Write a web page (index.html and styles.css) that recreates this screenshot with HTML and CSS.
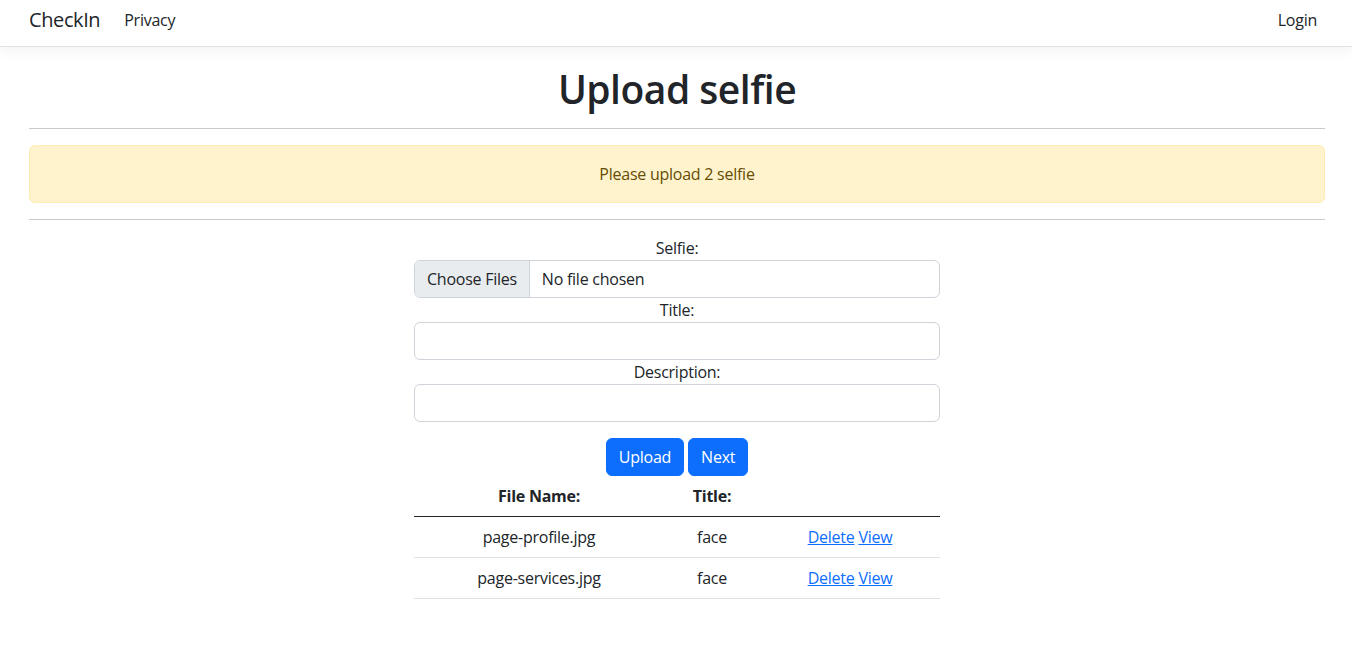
FILE: index.html
```html
<!DOCTYPE html>
<html lang="en">
<head>
<meta charset="utf-8">
<title>Upload selfie - CheckIn</title>
<link rel="stylesheet" href="styles.css">
</head>
<body>
<header>
  <nav class="navbar">
    <div class="nav-inner">
      <a class="brand" href="#">CheckIn</a>
      <ul class="nav-list">
        <li><a class="nav-link" href="#">Privacy</a></li>
      </ul>
      <ul class="nav-list nav-right">
        <li><a class="nav-link" href="#">Login</a></li>
      </ul>
    </div>
  </nav>
</header>
<main class="page">
  <h1 class="title">Upload selfie</h1>
  <hr class="rule">
  <div class="alert">Please upload 2 selfie</div>
  <hr class="rule rule-after">
  <form class="upload-form">
    <label class="form-label">Selfie:</label>
    <div class="file-input">
      <span class="file-btn">Choose Files</span>
      <span class="file-name">No file chosen</span>
    </div>
    <label class="form-label">Title:</label>
    <div class="text-input"></div>
    <label class="form-label">Description:</label>
    <div class="text-input"></div>
    <div class="actions">
      <span class="btn">Upload</span>
      <span class="btn">Next</span>
    </div>
    <table class="files">
      <thead>
        <tr><th class="c1">File Name:</th><th class="c2">Title:</th><th class="c3"></th></tr>
      </thead>
      <tbody>
        <tr><td>page-profile.jpg</td><td>face</td><td><a href="#">Delete</a> <a href="#">View</a></td></tr>
        <tr><td>page-services.jpg</td><td>face</td><td><a href="#">Delete</a> <a href="#">View</a></td></tr>
      </tbody>
    </table>
  </form>
</main>
</body>
</html>
```
FILE: styles.css
```css
* { box-sizing: border-box; }
html, body { margin: 0; padding: 0; }
body {
  font-family: "Open Sans", "Noto Sans", sans-serif;
  font-size: 16px;
  line-height: 1.5;
  letter-spacing: -0.25px;
  color: #212529;
  background: #fff;
}
a { color: #0d6efd; }
.navbar {
  background: #fff;
  border-bottom: 1px solid #dee2e6;
  box-shadow: 0 4px 12px rgba(0,0,0,0.05);
  height: 47px;
}
.nav-inner {
  display: flex;
  align-items: center;
  height: 40px;
  padding: 0 27px 0 29px;
}
.brand {
  font-size: 20px;
  color: #212529;
  text-decoration: none;
  margin-right: 16px;
  line-height: 30px;
  letter-spacing: -0.4px;
}
.nav-list {
  list-style: none;
  margin: 0;
  padding: 0;
  display: flex;
}
.nav-right { margin-left: auto; }
.nav-link {
  display: block;
  padding: 8px;
  color: #212529;
  text-decoration: none;
  font-size: 16px;
}
.page {
  padding: 0 27px 0 29px;
}
.title {
  margin: 18px 0 0;
  text-align: center;
  font-size: 39px;
  line-height: 48px;
  font-weight: 600;
  letter-spacing: -0.5px;
}
.rule {
  border: 0;
  border-top: 1px solid #c8c9ca;
  margin: 15px 0 16px;
  height: 0;
}
.rule-after { margin: 16px 0 16px; }
.alert {
  background: #fff3cd;
  border: 1px solid #ffecb5;
  color: #664d03;
  border-radius: 6px;
  padding: 16px;
  text-align: center;
  margin: 0;
}
.upload-form {
  width: 526px;
  margin: 0 auto;
  display: flex;
  flex-direction: column;
  align-items: stretch;
}
.form-label {
  display: block;
  text-align: center;
  line-height: 24px;
}
.file-input {
  display: flex;
  height: 38px;
  border: 1px solid #ced4da;
  border-radius: 6px;
  overflow: hidden;
}
.file-btn {
  background: #e9ecef;
  border-right: 1px solid #ced4da;
  padding: 6px 12px;
  line-height: 24px;
}
.file-name {
  padding: 6px 12px;
  line-height: 24px;
}
.text-input {
  height: 38px;
  border: 1px solid #ced4da;
  border-radius: 6px;
}
.actions {
  margin-top: 16px;
  display: flex;
  justify-content: center;
  gap: 4px;
}
.btn {
  background: #0d6efd;
  color: #fff;
  border-radius: 6px;
  padding: 6px 12px;
  line-height: 24px;
  border: 1px solid #0d6efd;
}
.files {
  width: 100%;
  border-collapse: collapse;
}
.files th, .files td {
  padding: 8px;
  text-align: center;
  line-height: 24px;
}
.files th { font-weight: 700; border-bottom: 1px solid #212529; }
.files td { border-bottom: 1px solid #dee2e6; }
.c1 { width: 250px; }
.c2 { width: 96px; }
```
